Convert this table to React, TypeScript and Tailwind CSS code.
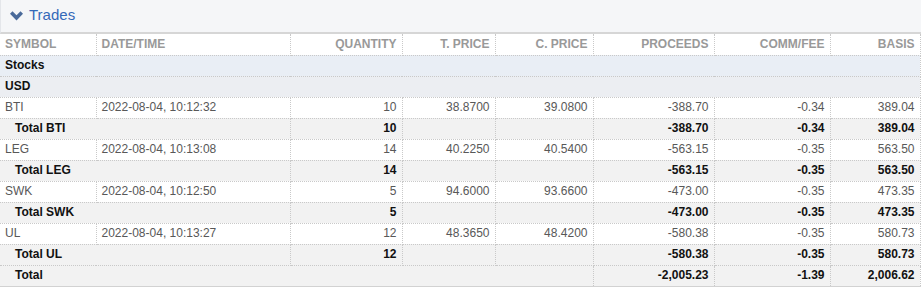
import React from 'react';

type Trade = {
  symbol: string;
  date: string;
  qty: string;
  tPrice: string;
  cPrice: string;
  proceeds: string;
  fee: string;
  basis: string;
};

const trades: Trade[] = [
  { symbol: 'BTI', date: '2022-08-04, 10:12:32', qty: '10', tPrice: '38.8700', cPrice: '39.0800', proceeds: '-388.70', fee: '-0.34', basis: '389.04' },
  { symbol: 'LEG', date: '2022-08-04, 10:13:08', qty: '14', tPrice: '40.2250', cPrice: '40.5400', proceeds: '-563.15', fee: '-0.35', basis: '563.50' },
  { symbol: 'SWK', date: '2022-08-04, 10:12:50', qty: '5', tPrice: '94.6000', cPrice: '93.6600', proceeds: '-473.00', fee: '-0.35', basis: '473.35' },
  { symbol: 'UL', date: '2022-08-04, 10:13:27', qty: '12', tPrice: '48.3650', cPrice: '48.4200', proceeds: '-580.38', fee: '-0.35', basis: '580.73' },
];

const headers = ['SYMBOL', 'DATE/TIME', 'QUANTITY', 'T. PRICE', 'C. PRICE', 'PROCEEDS', 'COMM/FEE', 'BASIS'];
const widths = ['w-[96px]', 'w-[194px]', 'w-[112px]', 'w-[93px]', 'w-[98px]', 'w-[121px]', 'w-[116px]', 'w-[90px]'];

const cell = 'h-[21px] border border-dotted border-[#c9c9c9] px-[5px] py-0 leading-[19px] whitespace-nowrap';
// first column has no left rule in the source table
const first = 'border-l-0';

function Chevron() {
  return (
    <svg width="13" height="10" viewBox="0 0 13 10" className="shrink-0">
      <polygon points="0,2.8 2.5,0.3 6.5,4.3 10.5,0.3 13,2.8 6.5,9.4" fill="#4a6a9a" />
    </svg>
  );
}

export default function App() {
  return (
    <div className="w-[921px] h-[287px] bg-white font-['Liberation_Sans',Arial,sans-serif] text-[12px]">
      <div className="flex h-[34px] items-center gap-[6px] border-b-2 border-l border-[#d6d6d6] border-l-[#e4e6ea] bg-[#f5f6f8] pl-[9px] pb-[1px]">
        <Chevron />
        <span className="text-[15px] text-[#3469b8]">Trades</span>
      </div>

      <table className="w-[920px] table-fixed border-collapse border-b border-b-[#d2d2d2]">
        <colgroup>
          {widths.map((w, i) => (
            <col key={i} className={w} />
          ))}
        </colgroup>
        <thead>
          <tr>
            {headers.map((h, i) => (
              <th
                key={h}
                className={`${cell} border-t-0 font-bold text-[#999999] ${i === 0 ? first : ''} ${i < 2 ? 'text-left' : 'text-right'}`}
              >
                {h}
              </th>
            ))}
          </tr>
        </thead>
        <tbody>
          <tr className="bg-[#e9eef5]">
            <td colSpan={8} className={`${cell} ${first} font-bold text-[#111]`}>Stocks</td>
          </tr>
          <tr className="bg-[#eceef2]">
            <td colSpan={8} className={`${cell} ${first} font-bold text-[#111]`}>USD</td>
          </tr>
          {trades.map(t => (
            <React.Fragment key={t.symbol}>
              <tr className="bg-white text-[#585858]">
                <td className={`${cell} ${first}`}>{t.symbol}</td>
                <td className={cell}>{t.date}</td>
                <td className={`${cell} text-right`}>{t.qty}</td>
                <td className={`${cell} text-right`}>{t.tPrice}</td>
                <td className={`${cell} text-right`}>{t.cPrice}</td>
                <td className={`${cell} text-right`}>{t.proceeds}</td>
                <td className={`${cell} text-right`}>{t.fee}</td>
                <td className={`${cell} text-right`}>{t.basis}</td>
              </tr>
              <tr className="bg-[#f2f2f2] font-bold text-[#111]">
                <td colSpan={2} className={`${cell} ${first} pl-[15px]`}>Total {t.symbol}</td>
                <td className={`${cell} text-right`}>{t.qty}</td>
                <td className={cell}></td>
                <td className={cell}></td>
                <td className={`${cell} text-right`}>{t.proceeds}</td>
                <td className={`${cell} text-right`}>{t.fee}</td>
                <td className={`${cell} text-right`}>{t.basis}</td>
              </tr>
            </React.Fragment>
          ))}
          <tr className="bg-[#f2f2f2] font-bold text-[#111]">
            <td colSpan={5} className={`${cell} ${first} pl-[15px]`}>Total</td>
            <td className={`${cell} text-right`}>-2,005.23</td>
            <td className={`${cell} text-right`}>-1.39</td>
            <td className={`${cell} text-right`}>2,006.62</td>
          </tr>
        </tbody>
      </table>
    </div>
  );
}
